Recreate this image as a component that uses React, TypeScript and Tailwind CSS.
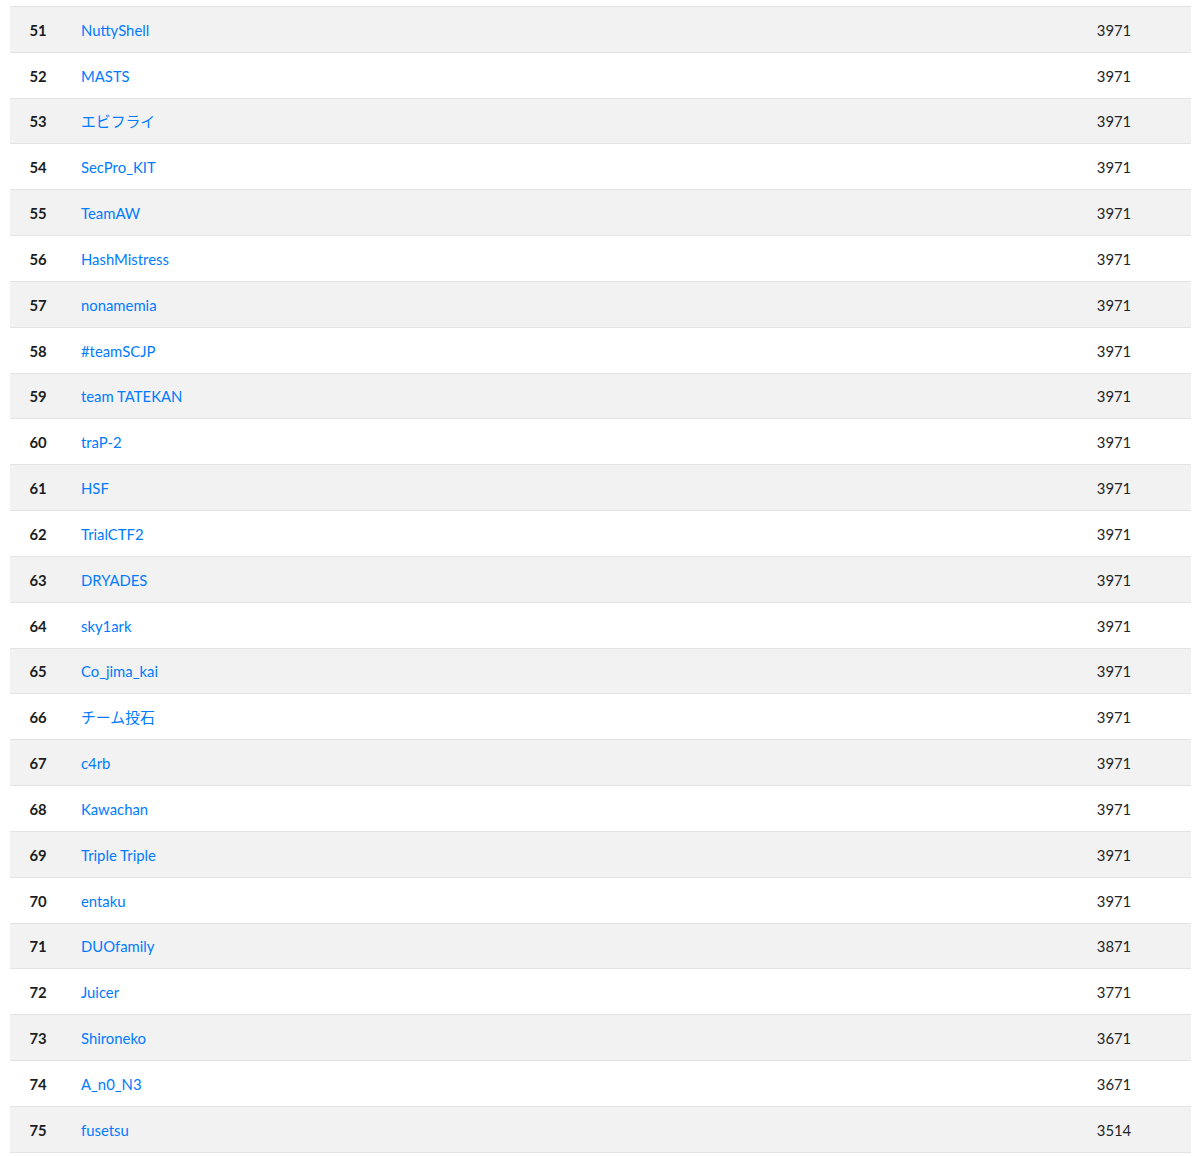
import React from "react";

const rows: [number, string, number][] = [
  [51, "NuttyShell", 3971],
  [52, "MASTS", 3971],
  [53, "エビフライ", 3971],
  [54, "SecPro_KIT", 3971],
  [55, "TeamAW", 3971],
  [56, "HashMistress", 3971],
  [57, "nonamemia", 3971],
  [58, "#teamSCJP", 3971],
  [59, "team TATEKAN", 3971],
  [60, "traP-2", 3971],
  [61, "HSF", 3971],
  [62, "TrialCTF2", 3971],
  [63, "DRYADES", 3971],
  [64, "sky1ark", 3971],
  [65, "Co_jima_kai", 3971],
  [66, "チーム投石", 3971],
  [67, "c4rb", 3971],
  [68, "Kawachan", 3971],
  [69, "Triple Triple", 3971],
  [70, "entaku", 3971],
  [71, "DUOfamily", 3871],
  [72, "Juicer", 3771],
  [73, "Shironeko", 3671],
  [74, "A_n0_N3", 3671],
  [75, "fusetsu", 3514],
];

export default function App() {
  return (
    <div
      className="bg-white min-h-[1156px] pt-[6px]"
      style={{ fontFamily: 'Lato, "Noto Sans CJK JP", sans-serif' }}
    >
      <div className="ml-[10px] w-[1181px] border-b border-[#e3e3e3]">
        {rows.map(([rank, name, score], i) => (
          <div
            key={rank}
            className={
              "flex items-center h-[45.84px] pt-[1px] border-t border-[#e3e3e3] text-[14.85px] " +
              (i % 2 === 0 ? "bg-[#f2f2f2]" : "bg-white")
            }
          >
            <div className="w-[56px] text-center font-bold text-[#1b1e21]">{rank}</div>
            <div className="flex-1 pl-[15px] text-[#007bff]">{name}</div>
            <div className="w-[154px] text-center text-[#212529]">{score}</div>
          </div>
        ))}
      </div>
    </div>
  );
}
